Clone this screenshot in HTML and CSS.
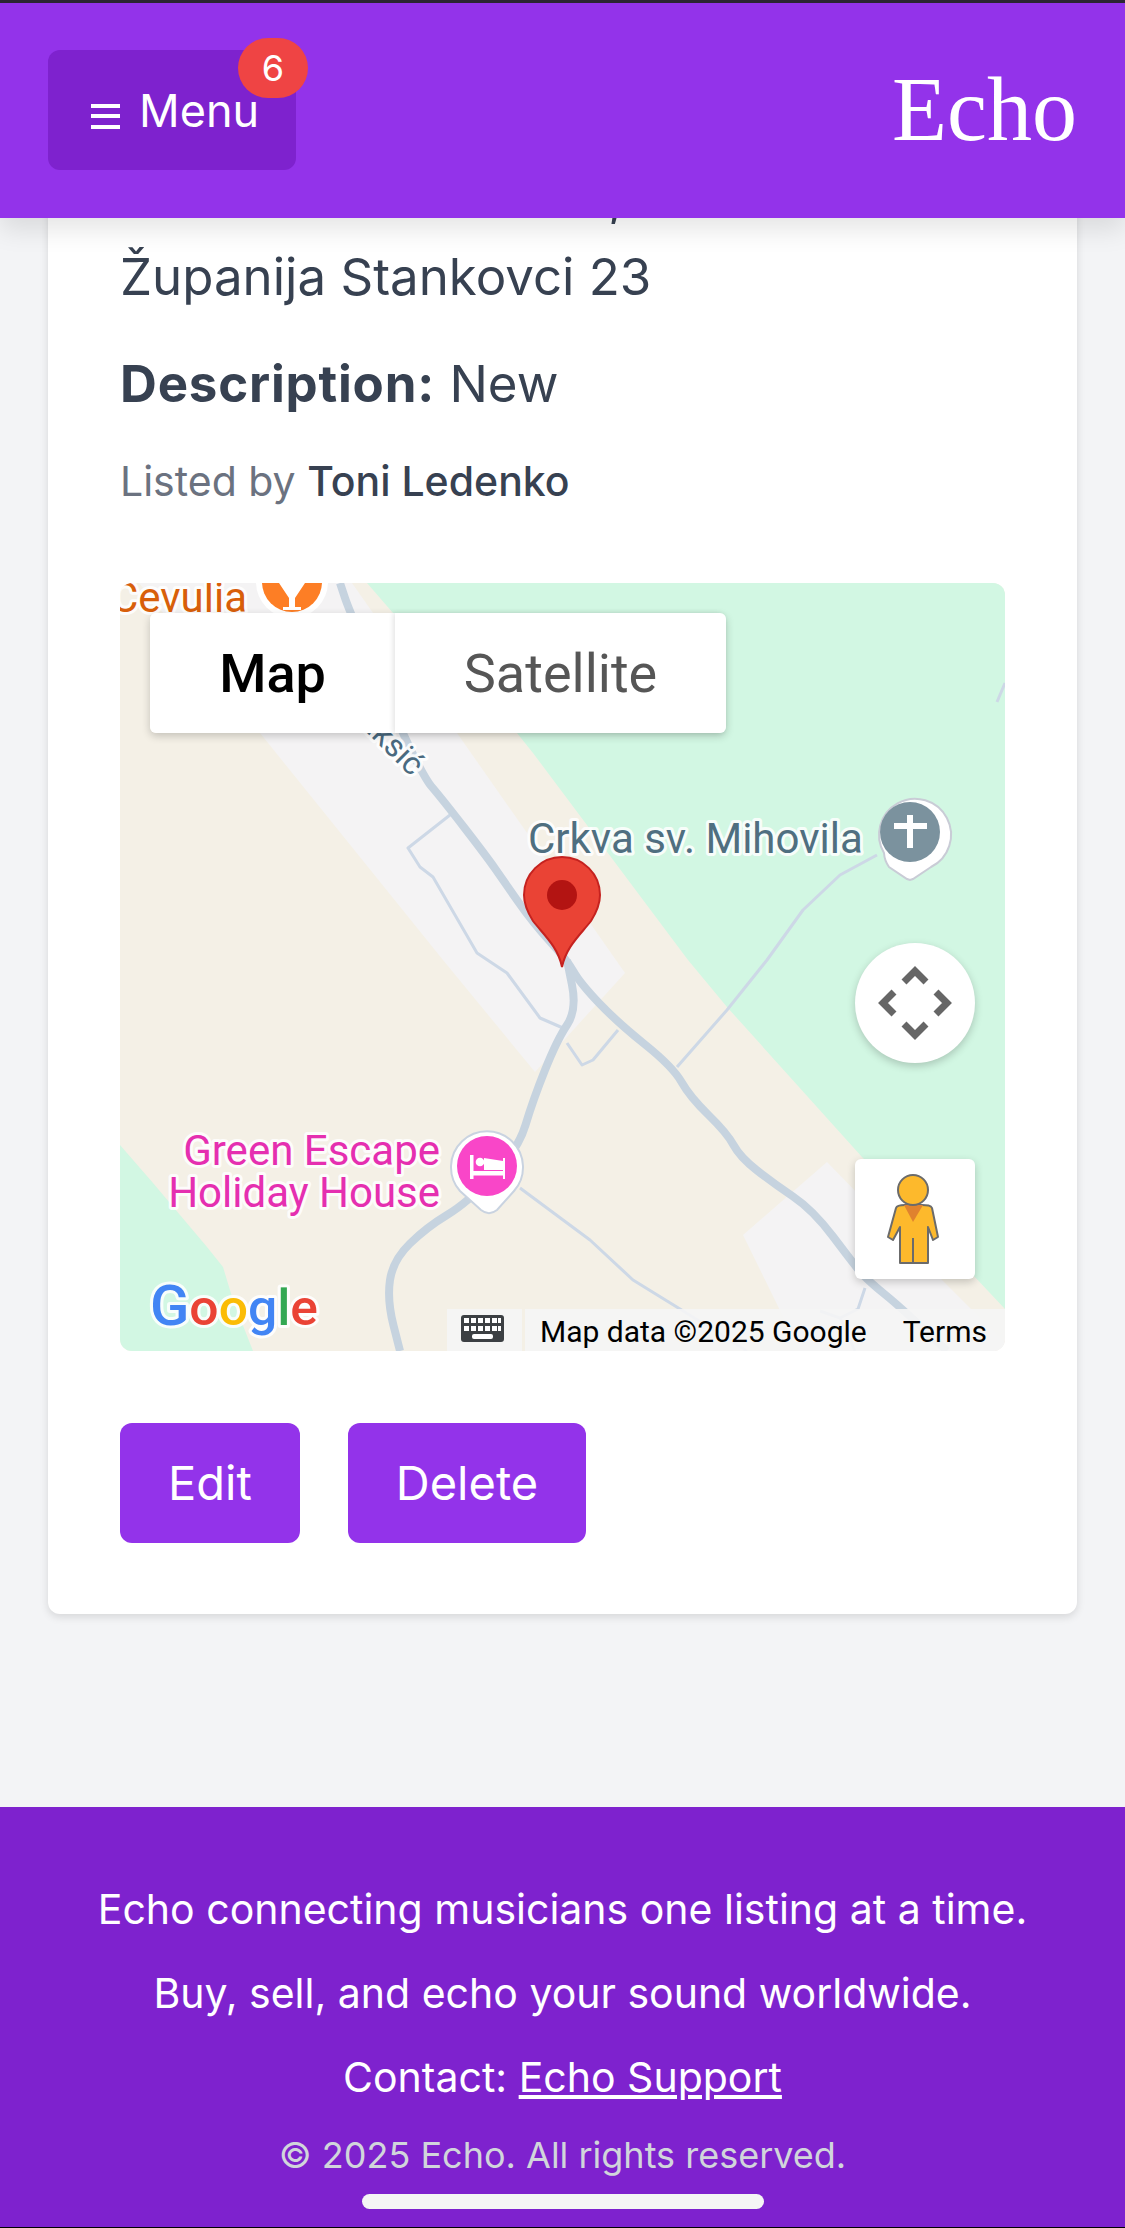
FILE: index.html
```html
<!DOCTYPE html>
<html lang="en">
  <head>
    <meta charset="UTF-8" />
    <meta name="viewport" content="width=device-width, initial-scale=1.0" />
    <title>Echo - Listing</title>
    <link rel="stylesheet" href="styles.css">
  </head>
  <body>
    <header class="site-header">
      <button class="menu-btn" type="button">
        <svg class="menu-icon" viewBox="0 0 29 25" aria-hidden="true">
          <rect x="0" y="0" width="29" height="4" />
          <rect x="0" y="10" width="29" height="4" />
          <rect x="0" y="21" width="29" height="4" />
        </svg>
        <span>Menu</span>
        <span class="menu-badge">6</span>
      </button>
      <a class="logo" href="#">Echo</a>
    </header>

    <main class="page">
      <article class="card">
        <p class="detail"><strong>Location:</strong> Stankovci,<br />Županija Stankovci 23</p>
        <p class="detail"><strong>Description:</strong> New</p>
        <p class="seller">Listed by <strong>Toni Ledenko</strong></p>

        <div class="map">
          <svg class="map-canvas" viewBox="0 0 885 768" aria-hidden="true">
            <rect width="885" height="768" fill="#f4f0e6" />
            <polygon fill="#d2f7e3" points="247,0 273,30 397,150 413,170 568,377 607,424 742,574 885,726 885,0" />
            <polygon fill="#d2f7e3" points="0,562 33,600 87,664 103,684 113,717 133,768 0,768" />
            <polygon fill="#f4f3f4" points="19,0 232,0 505,390 415,489 323,377" />
            <polygon fill="#f4f3f4" points="707,579 623,652 680,768 885,768 885,760 815,690" />

            <!-- small roads -->
            <g class="road-minor">
              <polyline points="330,232 288,265 300,284 313,294 357,370 387,390 420,435 443,445" />
              <polyline points="447,460 462,482 473,477 498,447" />
              <polyline points="557,484 607,427 647,377 683,327 720,292 757,272" />
              <polyline points="400,605 470,657 513,697 560,726 627,768" />
              <polyline points="877,119 885,100" />
              <polyline points="745,705 738,726 720,735 700,728" />
              <polyline points="720,735 735,768" />
            </g>

            <!-- main roads -->
            <g class="road-main">
              <path d="M220 0L225 15Q230 30 265 110Q300 190 311.5 203.5Q323 217 345 245.5Q367 274 375 285.5Q383 297 398 318.5Q413 340 430 358.5Q447 377 453.5 388.5Q460 400 478.5 419.5Q497 439 525 461.5Q553 484 561.5 499Q570 514 588.5 532Q607 550 613.5 562Q620 574 636.5 587Q653 600 673 613.5Q693 627 713 653.5Q733 680 740 688.5Q747 697 765 711.5Q783 726 827 768" />
              <path d="M447 377L452 402Q457 427 447 442Q437 457 425 487Q413 517 405.5 542Q398 567 372.5 593.5Q347 620 327 632Q307 644 290 660.5Q273 677 270 697Q267 717 273.5 742.5L280 768" />
            </g>

            <text class="map-label label-food" x="127" y="29" text-anchor="end">Cevulia</text>
            <circle cx="172" cy="-1" r="36" fill="#fff" />
            <circle cx="172" cy="-1" r="30" fill="#fd7e25" />
            <path d="M159 0H185L175 15V24H181V27H163V24H169V15Z" fill="#fff" />

            <text class="map-label label-street" transform="translate(291 194) rotate(45)" text-anchor="end">Maksić</text>

            <text class="map-label label-church" x="408" y="270">Crkva sv. Mihovila</text>
            <path d="M764 270a27 27 0 0 0 5 14l18 12 3 1 3-1 18-12a36 36 0 1 0-47-14z" fill="#fff" stroke="#c9ccd6" stroke-width="2" />
            <circle cx="790" cy="249" r="30" fill="#7b929e" />
            <path d="M787 232h6v8h14v6h-14v19h-6v-19h-13v-6h13z" fill="#fff" />

            <!-- red marker -->
            <path d="M442 274c-21 0-38 17-38 38 0 10 4 18 9 26 11 14 25 26 29 46 4-20 18-32 29-46 5-8 9-16 9-26 0-21-17-38-38-38z" fill="#ea4335" stroke="#c5221f" stroke-width="2" />
            <circle cx="442" cy="312" r="15" fill="#b31412" />

            <text class="map-label label-hotel" x="320" y="582" text-anchor="end">Green Escape</text>
            <text class="map-label label-hotel" x="320" y="624" text-anchor="end">Holiday House</text>
            <path d="M340 608a36 36 0 1 1 54 0l-17 19c-5 4-11 4-16 0z" fill="#fff" stroke="#c9d3e0" stroke-width="2" />
            <circle cx="367" cy="583" r="30" fill="#f946c8" />
            <path d="M350 572h3.5v16H383V575h2v21h-2v-3.5H353.5V596H350z" fill="#fff" />
            <polygon points="364,575 383,578 383,587 364,587" fill="#fff" />
            <circle cx="360" cy="579" r="4.3" fill="#fff" />

            <text class="google-logo" x="30" y="742" textLength="168" lengthAdjust="spacingAndGlyphs"><tspan class="google-cap" fill="#4285f4">G</tspan><tspan fill="#ea4335">o</tspan><tspan fill="#fbbc05">o</tspan><tspan fill="#4285f4">g</tspan><tspan fill="#34a853">l</tspan><tspan fill="#ea4335">e</tspan></text>
          </svg>

          <div class="map-types">
            <button class="map-type is-active" type="button">Map</button>
            <button class="map-type" type="button">Satellite</button>
          </div>

          <button class="map-round" type="button" aria-label="Move map">
            <svg viewBox="0 0 120 120" aria-hidden="true">
              <g fill="none" stroke="#666" stroke-width="7">
                <polyline points="49,39 60,28 71,39" />
                <polyline points="49,81 60,92 71,81" />
                <polyline points="39,49 28,60 39,71" />
                <polyline points="81,49 92,60 81,71" />
              </g>
            </svg>
          </button>

          <button class="map-square" type="button" aria-label="Street view">
            <svg viewBox="0 0 120 120" aria-hidden="true">
              <path d="M50 46h17c5 0 9 0 10 3l6 29-5 3-5-13v36H45V68l-7 13-5-3 8-29c1-3 5-3 9-3z" fill="#fdb92c" stroke="#6b6b6b" stroke-width="2" stroke-linejoin="round" />
              <line x1="58" y1="79" x2="58" y2="104" stroke="#6b6b6b" stroke-width="2" />
              <polygon points="49,46 68,46 58,63" fill="#e0822e" />
              <circle cx="58" cy="31" r="15" fill="#fdb92c" stroke="#6b6b6b" stroke-width="2" />
            </svg>
          </button>

          <div class="map-footer">
            <span class="map-keys">
              <svg viewBox="0 0 43 27" aria-hidden="true">
                <rect width="43" height="27" rx="3" fill="#3c4043" />
                <g fill="#fff">
                  <rect x="3" y="3" width="5" height="5" /><rect x="10" y="3" width="5" height="5" /><rect x="17" y="3" width="5" height="5" /><rect x="24" y="3" width="5" height="5" /><rect x="31" y="3" width="5" height="5" /><rect x="37" y="3" width="3" height="5" />
                  <rect x="3" y="11" width="5" height="5" /><rect x="10" y="11" width="5" height="5" /><rect x="17" y="11" width="5" height="5" /><rect x="24" y="11" width="5" height="5" /><rect x="31" y="11" width="5" height="5" /><rect x="37" y="11" width="3" height="5" />
                  <rect x="11" y="19" width="21" height="5" rx="2" />
                </g>
              </svg>
            </span>
            <span class="map-credit">Map data ©2025 Google</span>
            <span class="map-terms">Terms</span>
          </div>
        </div>

        <div class="actions">
          <a class="btn" href="#">Edit</a>
          <a class="btn" href="#">Delete</a>
        </div>
      </article>
    </main>

    <footer class="site-footer">
      <p>Echo connecting musicians one listing at a time.</p>
      <p>Buy, sell, and echo your sound worldwide.</p>
      <p>Contact: <a href="#">Echo Support</a></p>
      <p class="copyright">© 2025 Echo. All rights reserved.</p>
      <div class="home-bar"></div>
    </footer>
  </body>
</html>
```

FILE: styles.css
```css
* {
  box-sizing: border-box;
}
body {
  font-family: Inter, "Noto Sans", Arial, sans-serif;
  background-color: #f3f4f6;
  color: #374151;
  margin: 0;
  padding: 0;
  height: 2228px;
  overflow: hidden;
}
a {
  color: inherit;
  text-decoration: none;
}

/* header */
.site-header {
  position: sticky;
  top: 0;
  z-index: 10;
  height: 218px;
  background-color: #9333ea;
  border-top: 3px solid #2b2533;
  padding: 47px 48px 0;
  display: flex;
  justify-content: space-between;
  align-items: flex-start;
  box-shadow: 0 12px 24px rgba(0, 0, 0, 0.1);
}
.menu-btn {
  position: relative;
  width: 248px;
  height: 120px;
  background-color: #7e22ce;
  color: white;
  border: none;
  border-radius: 12px;
  font-family: inherit;
  font-size: 45px;
  line-height: 60px;
  padding: 2px 0 0 43px;
  display: flex;
  align-items: center;
  gap: 19px;
  cursor: pointer;
}
.menu-icon {
  width: 29px;
  height: 25px;
  margin-top: 10px;
  fill: white;
}
.menu-badge {
  position: absolute;
  top: -12px;
  right: -12px;
  width: 70px;
  height: 60px;
  border-radius: 30px;
  background-color: #ef4444;
  font-size: 36px;
  line-height: 60px;
  text-align: center;
}
.logo {
  font-family: "Liberation Serif", "Times New Roman", serif;
  font-size: 90px;
  line-height: 120px;
  color: white;
}

/* listing card */
.page {
  margin-top: -133px;
  padding: 0 48px 193px;
}
.card {
  background-color: white;
  border-radius: 12px;
  padding: 72px 72px 71px;
  box-shadow: 0 3px 9px rgba(0, 0, 0, 0.12);
}
.detail {
  font-size: 51px;
  line-height: 80px;
  margin: 0 0 27px;
}
.detail strong {
  font-weight: 700;
  letter-spacing: 0.8px;
}
.seller {
  font-size: 41px;
  line-height: 60px;
  color: #6b7280;
  margin: 0 0 72px;
}
.seller strong {
  font-weight: 500;
  color: #374151;
}

/* map */
.map {
  position: relative;
  width: 885px;
  height: 768px;
  border-radius: 12px;
  overflow: hidden;
  font-family: Roboto, Arial, sans-serif;
}
.map-canvas {
  display: block;
  width: 885px;
  height: 768px;
}
.road-minor polyline {
  fill: none;
  stroke: #cdd8e6;
  stroke-width: 3;
  stroke-linejoin: round;
}
.road-main path {
  fill: none;
  stroke: #c6d3df;
  stroke-width: 8;
  stroke-linejoin: round;
}
.map-label {
  font-family: Roboto, Arial, sans-serif;
  paint-order: stroke;
  stroke: rgba(255, 255, 255, 0.85);
  stroke-width: 6px;
  stroke-linejoin: round;
}
.label-food {
  font-size: 42px;
  fill: #d85f0a;
}
.label-street {
  font-size: 32px;
  fill: #4a6a80;
}
.label-church {
  font-size: 42px;
  fill: #4f6f80;
}
.label-hotel {
  font-size: 42px;
  fill: #e52fb0;
}
.google-logo {
  font-family: Roboto, Arial, sans-serif;
  font-size: 50px;
  font-weight: 500;
  paint-order: stroke;
  stroke: rgba(255, 255, 255, 0.85);
  stroke-width: 6px;
  stroke-linejoin: round;
}
.google-cap {
  font-size: 56px;
}
.map-types {
  position: absolute;
  top: 30px;
  left: 30px;
  display: flex;
  border-radius: 6px;
  box-shadow: 0 3px 9px rgba(0, 0, 0, 0.2);
}
.map-type {
  position: relative;
  height: 120px;
  border: none;
  background-color: white;
  color: #565656;
  font-family: inherit;
  font-size: 54px;
  padding: 0;
  width: 331px;
  border-radius: 0 6px 6px 0;
  box-shadow: -2px 0 5px rgba(0, 0, 0, 0.1);
}
.map-type.is-active {
  width: 245px;
  color: black;
  font-weight: 500;
  border-radius: 6px 0 0 6px;
  box-shadow: none;
}
.map-round,
.map-square {
  position: absolute;
  left: 735px;
  width: 120px;
  height: 120px;
  padding: 0;
  border: none;
  background-color: white;
  box-shadow: 0 3px 9px rgba(0, 0, 0, 0.2);
}
.map-round {
  top: 360px;
  border-radius: 50%;
}
.map-square {
  top: 576px;
  border-radius: 6px;
}
.map-round svg,
.map-square svg {
  display: block;
  width: 120px;
  height: 120px;
}
.map-footer {
  position: absolute;
  right: 0;
  bottom: 0;
  height: 42px;
  width: 558px;
  display: flex;
  align-items: center;
  font-size: 30px;
  color: black;
}
.map-keys {
  width: 75px;
  height: 42px;
  margin-right: 3px;
  padding: 6px 0 0 14px;
  background-color: rgba(245, 245, 245, 0.9);
}
.map-keys svg {
  display: block;
  width: 43px;
  height: 27px;
}
.map-credit {
  flex: 1;
  height: 42px;
  line-height: 46px;
  padding-left: 15px;
  background-color: rgba(245, 245, 245, 0.9);
}
.map-terms {
  height: 42px;
  line-height: 46px;
  padding: 0 18px 0 0;
  background-color: rgba(245, 245, 245, 0.9);
}

/* buttons */
.actions {
  display: flex;
  gap: 48px;
  margin-top: 72px;
}
.btn {
  height: 120px;
  padding: 0 48px;
  background-color: #9333ea;
  color: white;
  border-radius: 12px;
  font-size: 47px;
  line-height: 120px;
}

/* footer */
.site-footer {
  height: 421px;
  background-color: #7e22ce;
  border-bottom: 1px solid black;
  color: white;
  text-align: center;
  padding-top: 72px;
  position: relative;
}
.site-footer p {
  font-size: 41px;
  line-height: 60px;
  margin: 0 0 24px;
}
.site-footer a {
  text-decoration: underline;
}
.site-footer .copyright {
  font-size: 36px;
  line-height: 48px;
  color: #d1d5db;
  margin: 0;
}
.home-bar {
  width: 402px;
  height: 15px;
  margin: 15px auto 0;
  border-radius: 8px;
  background-color: #f5f5f5;
}
```
